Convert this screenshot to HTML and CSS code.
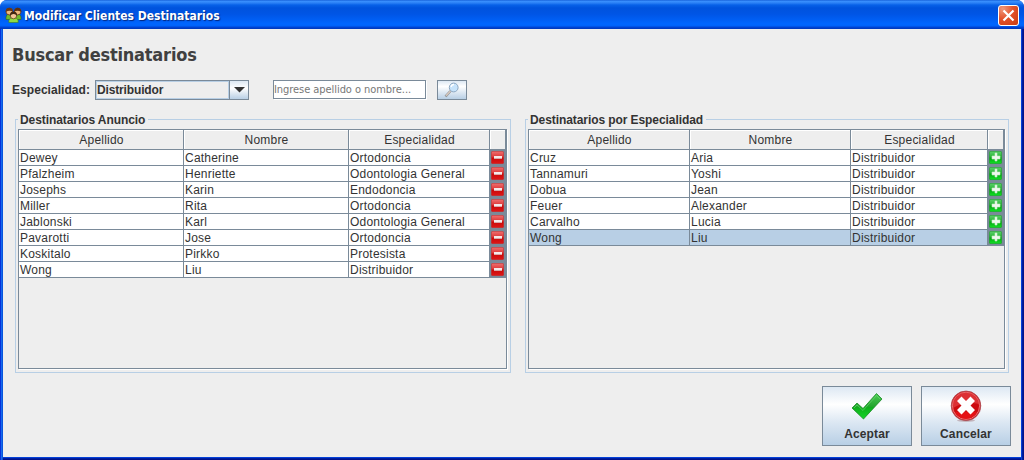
FILE: index.html
```html
<!DOCTYPE html>
<html lang="es">
<head>
<meta charset="utf-8">
<title>Modificar Clientes Destinatarios</title>
<link rel="stylesheet" href="styles.css">
</head>
<body>
<svg class="defs" width="0" height="0">
  <defs>
    <linearGradient id="red" x1="0" y1="0" x2="0" y2="1"><stop offset="0" stop-color="#f07070"/><stop offset=".48" stop-color="#da3434"/><stop offset=".52" stop-color="#c80808"/><stop offset="1" stop-color="#de1818"/></linearGradient>
    <linearGradient id="green" x1="0" y1="0" x2="0" y2="1"><stop offset="0" stop-color="#5cd06a"/><stop offset=".48" stop-color="#28b436"/><stop offset=".52" stop-color="#06a414"/><stop offset="1" stop-color="#10e224"/></linearGradient>
    <linearGradient id="tick" x1="0" y1="0" x2="0" y2="1"><stop offset="0" stop-color="#4ccc55"/><stop offset=".5" stop-color="#25a52f"/><stop offset=".55" stop-color="#0fae1c"/><stop offset="1" stop-color="#14d628"/></linearGradient>
    <symbol id="minus" viewBox="0 0 13 13"><rect x=".3" y=".3" width="12.400" height="12.400" rx="1.500" fill="url(#red)" stroke="#c42a2a" stroke-width=".6"/><rect x="3" y="5" width="8" height="2" fill="#f6e9e9"/><path d="M3 7.500h8" stroke="#d8a8a8"/></symbol>
    <symbol id="plus" viewBox="0 0 13 13"><rect x=".3" y=".3" width="12.400" height="12.400" rx="1.500" fill="url(#green)" stroke="#1c9a2a" stroke-width=".6"/><path d="M3 5h3V2h2v3h3v3H8v2H6V8H3z" fill="#eef8ee" stroke="#c4ecc4" stroke-width=".6"/></symbol>
  </defs>
</svg>
<div class="window">
  <header class="titlebar">
    <svg class="app-icon" width="17" height="16" viewBox="0 0 17 16">
      <path d="M1 12.500q-.5-5.500 3.500-5.500t4 5.500zM8.500 12.500q0-5.500 4-5.500t3.500 5.500z" fill="#6fba2c" stroke="#35601a" stroke-width=".6"/>
      <circle cx="4.300" cy="4.600" r="3.300" fill="#eeb87c" stroke="#6b3812" stroke-width=".8"/><path d="M.800 5Q.500 .800 4.300 .800T7.900 4.500Q4 2.800 .800 5z" fill="#6b3812"/>
      <circle cx="12.700" cy="4.600" r="3.300" fill="#eeb87c" stroke="#5c3012" stroke-width=".8"/><path d="M9.100 4.500Q9.200 .800 12.700 .800T16.200 5Q13 2.800 9.100 4.500z" fill="#5c3012"/>
      <path d="M3.800 15.600q-.5-5 4.700-5t4.700 5z" fill="#8fdc44" stroke="#3e7a1a" stroke-width=".6"/>
      <circle cx="8.500" cy="8.600" r="3.200" fill="#f6c898" stroke="#54300f" stroke-width=".7"/><path d="M5 9Q4.600 4.400 8.500 4.400T12 9Q10.500 6.800 8.500 7T5 9z" fill="#43260f"/>
    </svg>
    <span class="title">Modificar Clientes Destinatarios</span>
    <button class="close" aria-label="Cerrar"><svg width="17" height="17" viewBox="0 0 17 17"><path d="M3.500 3.500l10 10M13.500 3.500l-10 10" stroke="#fff" stroke-width="2.200"/></svg></button>
  </header>
  <main class="content">
    <h1 class="heading">Buscar destinatarios</h1>
    <div class="search">
      <span class="label">Especialidad:</span>
      <div class="combo"><span class="combo-value">Distribuidor</span><span class="combo-arrow"><svg width="11" height="6" viewBox="0 0 11 6"><path d="M0 0h11L5.500 5.500z" fill="#333"/></svg></span></div>
      <div class="field"><span class="hint">Ingrese apellido o nombre...</span></div>
      <button class="find" aria-label="Buscar"><svg width="16" height="16" viewBox="0 0 16 16"><path d="M1.500 14.500L6.500 9" stroke="#8f9498" stroke-width="2.600"/><path d="M2 13.800L6.500 9" stroke="#d9c9bd" stroke-width="1.300"/><circle cx="9.700" cy="5.500" r="4.400" fill="#c6e3fb" stroke="#8ca6c0"/><path d="M7 5q.5-2.500 3-2.500" fill="none" stroke="#fff" stroke-width="1.300"/></svg></button>
    </div>
    <div class="groups">
      <section class="group">
        <h2 class="legend"><span>Destinatarios Anuncio</span></h2>
        <div class="scroll">
          <div class="row head left"><b>Apellido</b><b>Nombre</b><b>Especialidad</b><b></b></div>
          <div class="row left"><span>Dewey</span><span>Catherine</span><span>Ortodoncia</span><i><svg><use href="#minus"/></svg></i></div>
          <div class="row left"><span>Pfalzheim</span><span>Henriette</span><span>Odontologia General</span><i><svg><use href="#minus"/></svg></i></div>
          <div class="row left"><span>Josephs</span><span>Karin</span><span>Endodoncia</span><i><svg><use href="#minus"/></svg></i></div>
          <div class="row left"><span>Miller</span><span>Rita</span><span>Ortodoncia</span><i><svg><use href="#minus"/></svg></i></div>
          <div class="row left"><span>Jablonski</span><span>Karl</span><span>Odontologia General</span><i><svg><use href="#minus"/></svg></i></div>
          <div class="row left"><span>Pavarotti</span><span>Jose</span><span>Ortodoncia</span><i><svg><use href="#minus"/></svg></i></div>
          <div class="row left"><span>Koskitalo</span><span>Pirkko</span><span>Protesista</span><i><svg><use href="#minus"/></svg></i></div>
          <div class="row left"><span>Wong</span><span>Liu</span><span>Distribuidor</span><i><svg><use href="#minus"/></svg></i></div>
        </div>
      </section>
      <section class="group">
        <h2 class="legend"><span>Destinatarios por Especialidad</span></h2>
        <div class="scroll">
          <div class="row head right"><b>Apellido</b><b>Nombre</b><b>Especialidad</b><b></b></div>
          <div class="row right"><span>Cruz</span><span>Aria</span><span>Distribuidor</span><i><svg><use href="#plus"/></svg></i></div>
          <div class="row right"><span>Tannamuri</span><span>Yoshi</span><span>Distribuidor</span><i><svg><use href="#plus"/></svg></i></div>
          <div class="row right"><span>Dobua</span><span>Jean</span><span>Distribuidor</span><i><svg><use href="#plus"/></svg></i></div>
          <div class="row right"><span>Feuer</span><span>Alexander</span><span>Distribuidor</span><i><svg><use href="#plus"/></svg></i></div>
          <div class="row right"><span>Carvalho</span><span>Lucia</span><span>Distribuidor</span><i><svg><use href="#plus"/></svg></i></div>
          <div class="row right selected"><span>Wong</span><span>Liu</span><span>Distribuidor</span><i><svg><use href="#plus"/></svg></i></div>
        </div>
      </section>
    </div>
    <footer class="actions">
      <button class="action"><svg width="32" height="32" viewBox="0 0 32 32"><path d="M1 18l5-5 6 5.500L25.500 3.500l5.500 5.500L12.500 29z" fill="url(#tick)" stroke="#188c24" stroke-width=".8"/><path d="M3 18l3-3 6 5.500L25.500 5.500l3.500 3.500" fill="none" stroke="#72dc7a" stroke-width=".8" opacity=".7"/></svg><span>Aceptar</span></button>
      <button class="action"><svg width="32" height="32" viewBox="0 0 32 32"><ellipse cx="16" cy="30.500" rx="9" ry="1.500" fill="#c3b5bd"/><circle cx="16" cy="15.800" r="14.800" fill="#cc0b10" stroke="#a85058" stroke-width=".8"/><circle cx="16" cy="15.800" r="13.600" fill="none" stroke="#f08080" stroke-width=".9"/><path d="M3 14Q4 3 16 2.500T29 14Q15 11 3 18z" fill="#e64a4d" opacity=".6"/><path d="M5 22q4 7 11 7t11-7z" fill="#f01418" opacity=".7"/><path d="M7 11l4.500-4.500 4.500 4.500 4.500-4.500L25 11l-4.500 4.500L25 20l-4.500 4.500L16 20l-4.500 4.500L7 20l4.500-4.500z" fill="#fff"/></svg><span>Cancelar</span></button>
    </footer>
  </main>
</div>
</body>
</html>
```
FILE: styles.css
```css
* { box-sizing: border-box; }
body { margin: 0; background: #fff; color: #333; font: 12px/15px "Liberation Sans", Arial, sans-serif; }
.defs { position: absolute; }
button { padding: 0; font: inherit; color: inherit; }
.window {
  width: 1024px; height: 460px; display: flex; flex-direction: column; overflow: hidden;
  border-radius: 7px 7px 0 0; padding: 0 3px 3px;
  background: linear-gradient(90deg, #0831d9 0 1px, #166aee 1px 2px, #0855dd 2px 3px, transparent 3px 1021px, #0540d8 1021px 1022px, #001ea0 1022px 1023px, #00138c 1023px), linear-gradient(#0540d8 0 457px, #0441d8 457px 458px, #001ea0 458px 459px, #00138c 459px);
}
.titlebar {
  height: 29px; flex: none; margin: 0 -3px; padding: 1px 5px 0 5px; display: flex; align-items: center;
  background: linear-gradient(#0b53cf 0, #3c92ff 1px, #2a80f5 3px, #0761e8 5px, #0053dd 8px, #0055e5 14px, #005df2 19px, #0066ff 24px, #0062f8 26px, #0046d8 27px, #0037b8 29px);
}
.app-icon { flex: none; margin: 0 2px 1px 0; }
.title { flex: 1; color: #fff; font: bold 12px/16px "DejaVu Sans Condensed", "DejaVu Sans", sans-serif; letter-spacing: 0; text-shadow: 1px 1px 1px #04267c; white-space: nowrap; padding-top: 1px; }
.close { width: 21px; height: 21px; display: grid; place-items: center; border: 1px solid #fff; border-radius: 3px; background: radial-gradient(circle at 20% 15%, #f0987b, #e3532c 45%, #cb3c10); margin-top: 1px; }
.content { flex: 1; display: flex; flex-direction: column; background: #eee; padding: 15px 11px 0 9px; }
.heading { margin: 0; height: 36px; font: bold 18px/22px "DejaVu Sans Condensed", "DejaVu Sans", sans-serif; color: #404040; letter-spacing: -.2px; white-space: nowrap; }
.search { height: 20px; display: flex; }
.label { width: 83px; font-weight: bold; line-height: 21px; letter-spacing: .05px; white-space: nowrap; }
.combo { width: 154px; height: 20px; display: flex; border: 1px solid #7a8a99; }
.combo-value { flex: 1; border: 1px solid #b8cfe5; font-weight: bold; line-height: 16px; letter-spacing: -.15px; }
.combo-arrow { width: 19px; border-left: 1px solid #7a8a99; display: grid; place-items: center; background: linear-gradient(#dde8f3, #fff 40%, #b8cfe5); }
.field { width: 153px; height: 19px; margin-left: 24px; border: 1px solid #7a8a99; background: #fff; box-shadow: 1px 1px 0 #fff; font: 11px/18px "DejaVu Sans Condensed", "DejaVu Sans", sans-serif; color: #777; overflow: hidden; white-space: nowrap; }
.hint { letter-spacing: -.06px; }
.find { width: 30px; height: 20px; margin-left: 11px; display: grid; place-items: center; border: 1px solid #7a8a99; background: linear-gradient(#dde8f3, #fff 30%, #b8cfe5); }
.groups { display: grid; grid-template-columns: 496px 484px; gap: 14px; height: 254px; margin: 19px 0 0 3px; }
.group { border: 1px solid #b8cfe5; padding: 0 3px 0 2px; }
.legend { height: 9px; margin: 0; font-size: 12px; line-height: 16px; letter-spacing: -.08px; }
.legend span { display: inline-block; height: 12px; margin-top: -8px; padding: 0 3px 0 2px; background: #eee; vertical-align: top; white-space: nowrap; }
.scroll { height: 240px; border: 1px solid #7a8a99; box-shadow: 1px 1px 0 #fff; }
.row { display: grid; grid-template-rows: 100%; height: 16px; letter-spacing: .22px; color: #333; }
.left { grid-template-columns: 165px 165px 141px 1fr; }
.right { grid-template-columns: 161px 161px 137px 1fr; }
.row span { border: solid #7a8a99; border-width: 0 1px 1px 0; background: #fff; padding-left: 1px; line-height: 16px; white-space: nowrap; }
.row i { display: block; background: #7a8a99; padding: 1px 0 0 1px; }
.row i svg { display: block; width: 13px; height: 13px; }
.row.selected span { background: #b8cfe5; }
.row.head { height: 20px; }
.head b { font-weight: normal; text-align: center; line-height: 21px; border: solid #7a8a99; border-width: 0 1px 1px 0; box-shadow: inset 1px 1px 0 #fff; white-space: nowrap; padding-left: 1px; }
.actions { display: flex; justify-content: flex-end; gap: 9px; margin: 13px -1px 0 0; }
.action { width: 90px; height: 60px; display: flex; flex-direction: column; align-items: center; border: 1px solid #7a8a99; background: linear-gradient(#dde8f3, #fff 30%, #dde8f3 60%, #b8cfe5); font-weight: bold; padding-top: 3px; letter-spacing: .15px; }
.action span { line-height: 16px; margin-top: 4px; }
```
